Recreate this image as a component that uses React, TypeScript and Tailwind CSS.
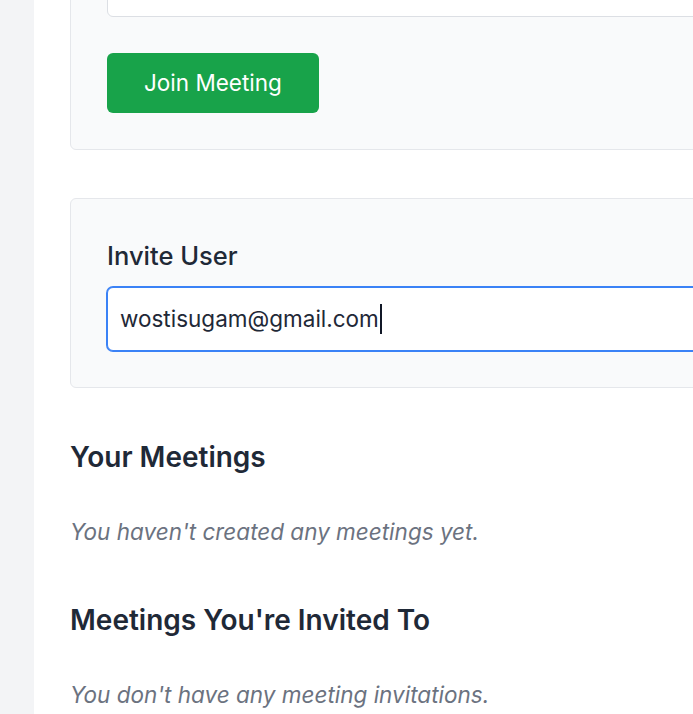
const font = "font-['Inter','Noto_Sans',sans-serif]";

function Card({ className, children }: { className?: string; children: React.ReactNode }) {
  return (
    <div className={`rounded-[6px] border border-[#e5e7eb] bg-[#f9fafb] px-[36px] py-[36px] ${className ?? ""}`}>
      {children}
    </div>
  );
}

function EmptyState({ title, text, className }: { title: string; text: string; className?: string }) {
  return (
    <section className={className}>
      <h2 className="text-[28px] font-semibold leading-[36px] text-[#1f2937]">{title}</h2>
      <p className="mt-[41px] text-[22.5px] italic leading-[32px] text-[#6b7280]">{text}</p>
    </section>
  );
}

export default function App() {
  return (
    <div className={`flex h-[714px] w-full overflow-hidden bg-white ${font}`}>
      <aside className="w-[34px] shrink-0 bg-[#f3f4f6]" />

      <main className="w-[900px] shrink-0 pl-[36px]">
        <Card className="-mt-[84px]">
          <div className="h-[64px] rounded-[6px] border border-[#dcdfe4] bg-white" />
          <button className="mt-[36px] flex h-[60px] items-center rounded-[6px] bg-[#18a34a] px-[37px] text-[22.5px] text-white">
            Join Meeting
          </button>
        </Card>

        <Card className="mt-[48px] pt-[41px]">
          <label className="block text-[25.5px] font-medium leading-[32px] text-[#1f2937]">Invite User</label>
          <div className="mt-[15px] flex h-[64px] items-center rounded-[6px] border border-[#3b82f6] bg-white pl-3 text-[22.5px] text-[#1f2937] ring-1 ring-[#3b82f6]">
            <span>wostisugam@gmail.com</span>
            <span className="ml-[1px] h-[30px] w-[2px] bg-[#111827]" />
          </div>
        </Card>

        <EmptyState
          className="mt-[51px]"
          title="Your Meetings"
          text="You haven't created any meetings yet."
        />
        <EmptyState
          className="mt-[54px]"
          title="Meetings You're Invited To"
          text="You don't have any meeting invitations."
        />
      </main>
    </div>
  );
}
